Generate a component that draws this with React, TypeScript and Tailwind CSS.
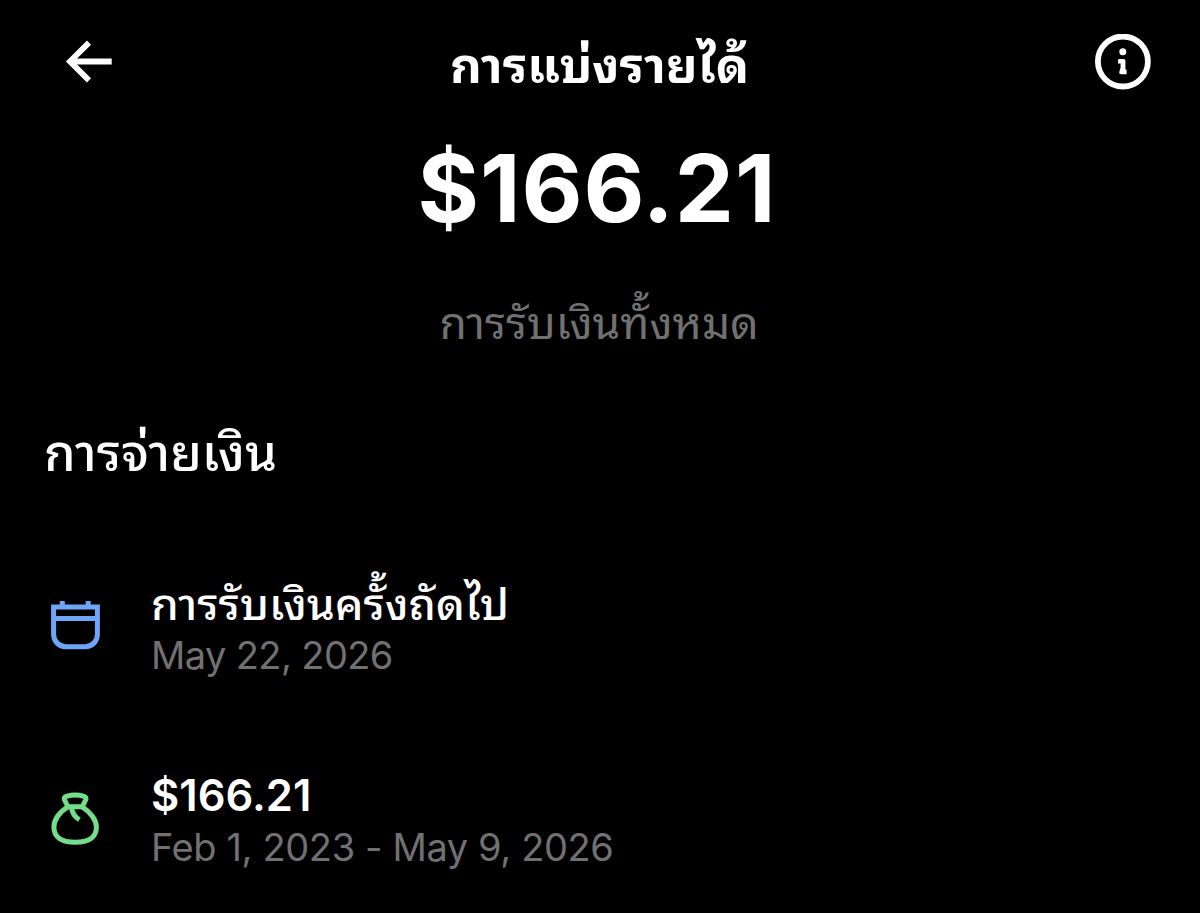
import type { ReactNode } from 'react'

interface PayoutRow {
  icon: ReactNode
  title: string
  titleClass: string
  date: string
  dateClass: string
}

function BackArrow() {
  return (
    <svg width="48" height="44" viewBox="0 0 48 44" fill="none" stroke="#fff" strokeWidth="5.8">
      <path d="M24 2.6 L5 21.5 L24 40.4" />
      <path d="M6 21.5 H46.7" />
    </svg>
  )
}

function InfoIcon() {
  return (
    <svg width="56" height="56" viewBox="0 0 56 56" fill="none">
      <circle cx="27.9" cy="27.5" r="25" stroke="#fff" strokeWidth="5.8" />
      <circle cx="27.8" cy="17.8" r="3.5" fill="#fff" />
      <path
        d="M24.4 25 H28.6 Q30.4 25 30.4 26.8 V35.6 H31.6 V40.2 H26 Q24 40.2 24.2 38.2 L25.6 33.4 V29.6 H23 V26.4 Q23 25 24.4 25 Z"
        fill="#fff"
      />
    </svg>
  )
}

function CalendarIcon() {
  return (
    <svg width="50" height="50" viewBox="0 1 50 50" fill="none" stroke="#6ea6f7" strokeWidth="5">
      <path d="M2.6 7 H46.4 V34.5 A12.2 12.2 0 0 1 34.2 46.7 H14.8 A12.2 12.2 0 0 1 2.6 34.5 Z" />
      <path d="M2.6 18.6 H46.4 M11.3 1 V6 M37.2 1 V6" />
    </svg>
  )
}

function MoneyBagIcon() {
  return (
    <svg width="50" height="54" viewBox="0 0 50 54" fill="none" stroke="#74dd89" strokeWidth="5" strokeLinejoin="round">
      <path d="M17 14.8 L13.6 8 Q12.6 5.2 15.2 4.3 Q24.2 1.8 33.2 4.3 Q35.8 5.2 34.6 8 L31.2 14.8 Z" />
      <path d="M17 14.8 C8 20 2.9 28 2.9 35.3 C2.9 45.5 11 50.3 24.2 50.3 C37.4 50.3 45.4 45.5 45.4 35.3 C45.4 28 39.5 20 31.2 14.8" />
      <path d="M20.5 15.4 C21 20.4 23.8 24.8 28.4 27.6" />
    </svg>
  )
}

const payouts: PayoutRow[] = [
  {
    icon: <CalendarIcon />,
    title: 'การรับเงินครั้งถัดไป',
    titleClass: 'text-[44.5px] font-medium',
    date: 'May 22, 2026',
    dateClass: 'leading-[50px] tracking-[-0.6px]',
  },
  {
    icon: <MoneyBagIcon />,
    title: '$166.21',
    titleClass: '-mt-[2px] mb-[2px] text-[43.5px] font-semibold',
    date: 'Feb 1, 2023 - May 9, 2026',
    dateClass: 'leading-[48px] tracking-[-0.38px]',
  },
]

export default function App() {
  return (
    <div className="h-[913px] w-[1200px] overflow-hidden bg-black font-['Inter','Thonburi','Noto_Sans_Thai_Looped',sans-serif] text-white">
      <header className="flex h-[124px] items-center justify-between pr-[49px] pl-[65px]">
        <button className="w-[56px]">
          <BackArrow />
        </button>
        <h1 className="-ml-[17px] pt-[6px] text-[49.2px] leading-[60px] font-bold whitespace-nowrap">การแบ่งรายได้</h1>
        <button>
          <InfoIcon />
        </button>
      </header>

      <section className="flex flex-col items-center">
        <p className="-ml-[6px] h-[128px] text-[94px] leading-[128px] font-bold tracking-[0.9px] whitespace-nowrap">$166.21</p>
        <p className="mt-[37px] -ml-[2px] text-[44.5px] leading-[68px] whitespace-nowrap text-[#717171]">การรับเงินทั้งหมด</p>
      </section>

      <h2 className="mt-[62px] pl-[44px] text-[50.8px] leading-[68px] font-medium whitespace-nowrap">การจ่ายเงิน</h2>

      <ul className="mt-[91px]">
        {payouts.map((row) => (
          <li key={row.date} className="flex h-[193px] pl-[51px]">
            <div className="flex h-[95px] w-[100px] shrink-0 items-center">{row.icon}</div>
            <div className="whitespace-nowrap">
              <p className={`h-[52px] leading-[52px] ${row.titleClass}`}>{row.title}</p>
              <p className={`h-[50px] text-[38px] text-[#717171] ${row.dateClass}`}>{row.date}</p>
            </div>
          </li>
        ))}
      </ul>
    </div>
  )
}
